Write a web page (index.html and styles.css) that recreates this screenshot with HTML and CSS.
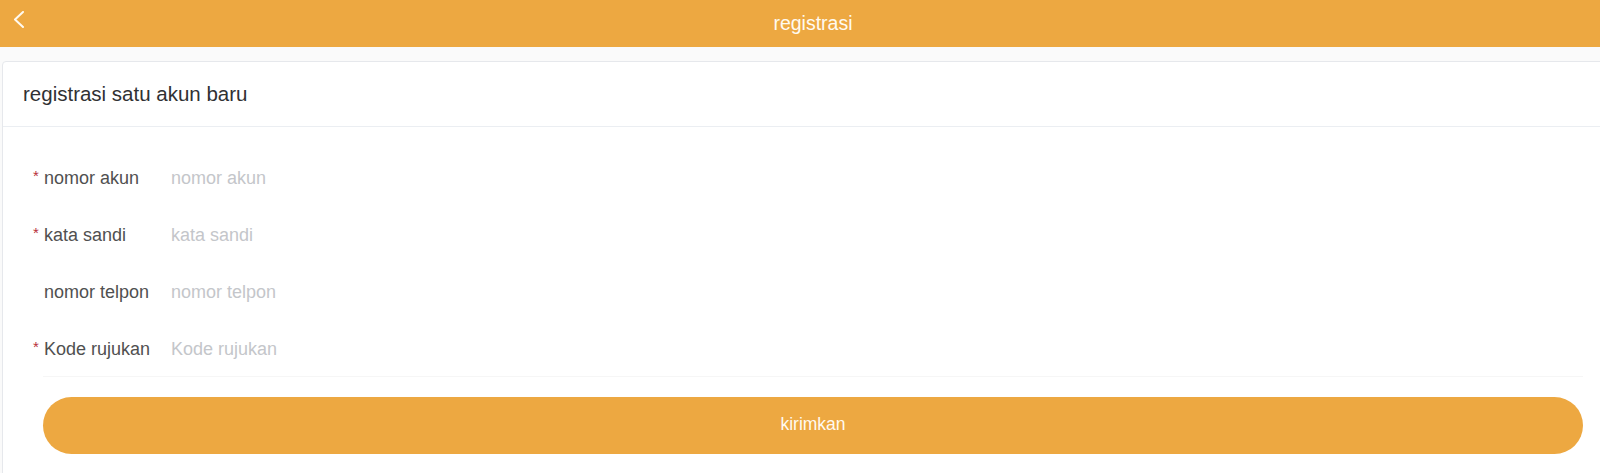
FILE: index.html
```html
<!DOCTYPE html>
<html lang="id">
<head>
<meta charset="utf-8">
<title>registrasi</title>
<link rel="stylesheet" href="styles.css">
</head>
<body>
<div class="page">
  <header class="topbar">
    <div class="topbar-left">
      <svg class="back" width="12" height="18" viewBox="0 0 12 18" aria-hidden="true">
        <polyline points="10,1 2,8.5 10,16" fill="none" stroke="#fffaf0" stroke-width="2" stroke-linecap="round" stroke-linejoin="round"/>
      </svg>
    </div>
    <div class="topbar-title">registrasi</div>
    <div></div>
  </header>

  <section class="card">
    <div class="card-header">registrasi satu akun baru</div>
    <div class="card-body">
      <div class="form">
        <div class="row">
          <label class="label required">nomor akun</label>
          <input class="input" type="text" placeholder="nomor akun">
        </div>
        <div class="row">
          <label class="label required">kata sandi</label>
          <input class="input" type="password" placeholder="kata sandi">
        </div>
        <div class="row">
          <label class="label">nomor telpon</label>
          <input class="input" type="text" placeholder="nomor telpon">
        </div>
        <div class="row">
          <label class="label required">Kode rujukan</label>
          <input class="input" type="text" placeholder="Kode rujukan">
        </div>
      </div>
      <button class="submit" type="button">kirimkan</button>
    </div>
  </section>
</div>
</body>
</html>
```

FILE: styles.css
```css
html {
  overflow: hidden;
}
body {
  margin: 0;
  background: #fafafa;
  font-family: "Liberation Sans", Arial, sans-serif;
}
.page {
  width: 1626px;
}
.topbar {
  height: 47px;
  background: #eda841;
  display: grid;
  grid-template-columns: 1fr auto 1fr;
  align-items: center;
}
.topbar-left {
  display: flex;
  align-items: center;
  padding-left: 13px;
  padding-bottom: 10px;
}
.back {
  display: block;
}
.topbar-title {
  color: #fffaf0;
  font-size: 19.5px;
  line-height: 47px;
  padding-bottom: 3px;
}
.card {
  margin: 14px 2px 0;
  background: #fff;
  border: 1px solid #e6e8ec;
  border-radius: 4px;
}
.card-header {
  padding: 18px 20px;
  line-height: 28px;
  font-size: 20.5px;
  color: #303133;
  border-bottom: 1px solid #ebeef2;
}
.card-body {
  padding: 21px 40px 24px;
}
.form {
  border-bottom: 1px solid #f6f6f6;
}
.row {
  height: 57px;
  box-sizing: border-box;
  padding-top: 3px;
  display: flex;
  align-items: center;
}
.label {
  position: relative;
  width: 127px;
  flex: none;
  font-size: 18px;
  color: #505050;
  padding-left: 1px;
}
.required::before {
  content: "*";
  position: absolute;
  left: -10px;
  top: -1px;
  color: #b8303a;
  font-size: 15px;
}
.input {
  flex: 1;
  border: 0;
  outline: 0;
  padding: 0;
  font-family: inherit;
  font-size: 18px;
  color: #333;
  background: transparent;
}
.input::placeholder {
  color: #c4c6ca;
}
.submit {
  display: block;
  width: 100%;
  height: 57px;
  margin-top: 20px;
  border: 0;
  border-radius: 29px;
  background: #eda841;
  color: #fffaf0;
  font-family: inherit;
  font-size: 17.5px;
  padding: 0 0 3px;
}
```
